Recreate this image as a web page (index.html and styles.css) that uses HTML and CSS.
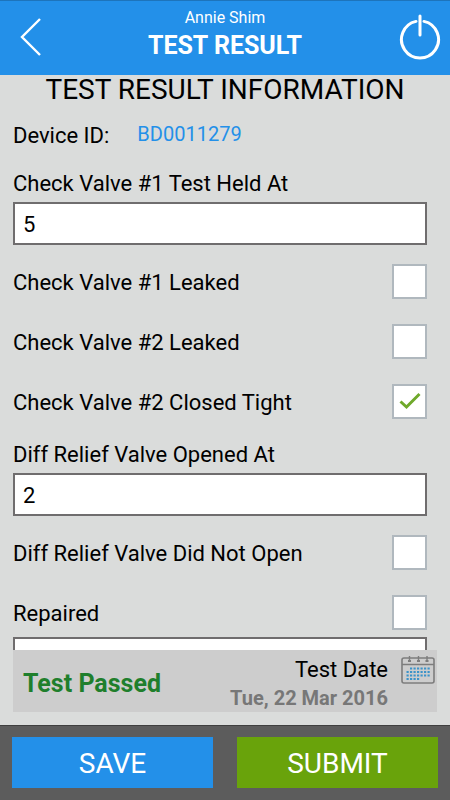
FILE: index.html
```html
<!DOCTYPE html>
<html lang="en">
<head>
    <title>Test Result</title>
    <meta charset="utf-8" />
    <meta name="viewport" content="width=device-width, initial-scale=1">
    <link rel="stylesheet" href="styles.css">
</head>
<body>
    <header class="header">
        <button type="button" class="icon-button back" aria-label="Back">
            <svg width="24" height="40" viewBox="0 0 24 40" fill="none" stroke="#fff" stroke-width="2.4">
                <path d="M22 2L4 20l18 18" />
            </svg>
        </button>
        <div class="header-text">
            <div class="user">Annie Shim</div>
            <h1>TEST RESULT</h1>
        </div>
        <button type="button" class="icon-button" aria-label="Log out">
            <svg width="42" height="46" viewBox="0 0 42 46" fill="none" stroke="#fff" stroke-width="3" stroke-linecap="round">
                <path d="M17 7.4a18.5 18.5 0 1 0 8 0M21 2v19" />
            </svg>
        </button>
    </header>
    <form class="form" id="result-form">
        <h2>TEST RESULT INFORMATION</h2>
        <div class="device">
            <span>Device ID:</span>
            <a href="#device">BD0011279</a>
        </div>
        <div class="field">
            <label for="cv1-held">Check Valve #1 Test Held At</label>
            <input type="text" id="cv1-held" value="5">
        </div>
        <div class="check">
            <label for="cv1-leaked">Check Valve #1 Leaked</label>
            <input type="checkbox" id="cv1-leaked">
        </div>
        <div class="check">
            <label for="cv2-leaked">Check Valve #2 Leaked</label>
            <input type="checkbox" id="cv2-leaked">
        </div>
        <div class="check">
            <label for="cv2-closed">Check Valve #2 Closed Tight</label>
            <span class="tick-box">
                <input type="checkbox" id="cv2-closed" checked>
                <svg class="tick" width="22" height="18" viewBox="0 0 22 18" fill="none" stroke="#6fa92b" stroke-width="3">
                    <path d="M1.5 9.5l6 5.5L20.5 2" />
                </svg>
            </span>
        </div>
        <div class="field">
            <label for="relief-opened">Diff Relief Valve Opened At</label>
            <input type="text" id="relief-opened" value="2">
        </div>
        <div class="check">
            <label for="relief-closed">Diff Relief Valve Did Not Open</label>
            <input type="checkbox" id="relief-closed">
        </div>
        <div class="check">
            <label for="repaired">Repaired</label>
            <input type="checkbox" id="repaired">
        </div>
        <textarea class="notes" aria-label="Repair notes"></textarea>
    </form>
    <section class="summary">
        <div class="status">Test Passed</div>
        <div class="date">
            <div class="date-label">Test Date</div>
            <div class="date-value">Tue, 22 Mar 2016</div>
        </div>
        <button type="button" class="calendar" aria-label="Pick test date">
            <svg width="34" height="30" viewBox="0 0 34 30" fill="none" stroke="#7d7d7d">
                <rect x="1" y="3" width="32" height="25" rx="2" stroke-width="1.6" />
                <path d="M1 9.5h32" stroke-width="1.5" />
                <path d="M8.5 1v6M17.5 1v6M26 1v6" stroke-width="1.4" />
                <path d="M8.5 5v2M17.5 5v2M26 5v2" stroke-width="3" />
                <g stroke="#3c93c9" stroke-width="2.2" stroke-dasharray="2.2 1.3">
                    <path d="M9 13.5h20.5" />
                    <path d="M5.5 17h24" />
                    <path d="M5.5 20.5h24" />
                    <path d="M5.5 24h13" />
                </g>
            </svg>
        </button>
    </section>
    <footer class="footer">
        <button type="button" class="save">SAVE</button>
        <button type="submit" form="result-form" class="submit">SUBMIT</button>
    </footer>
</body>
</html>
```

FILE: styles.css
```css
* {
    box-sizing: border-box;
}
body {
    font-family: Roboto, 'Liberation Sans', sans-serif;
    font-size: 22px;
    line-height: 28px;
    color: #000;
    background-color: #dadcdb;
    margin: 0;
    height: 100vh;
    display: flex;
    flex-direction: column;
}
button, input, textarea {
    font-family: inherit;
    margin: 0;
}
button {
    border: none;
    padding: 0;
    cursor: pointer;
}
svg {
    display: block;
}
.header {
    display: flex;
    align-items: center;
    justify-content: space-between;
    height: 75px;
    flex-shrink: 0;
    padding: 0 9px 2px;
    color: #fff;
    background-color: #2390e9;
    border-top: 1px solid #1d74bb;
}
.header-text {
    text-align: center;
    padding-bottom: 6px;
}
.user {
    font-size: 16px;
    line-height: 24px;
}
h1 {
    font-size: 25px;
    line-height: 32px;
    margin: 0;
}
.icon-button {
    display: flex;
    width: 42px;
    background: none;
}
.back {
    padding-left: 9px;
}
.form {
    flex: 1;
    min-height: 0;
    overflow: hidden;
    margin-top: -4px;
    padding: 4px 23px 0 13px;
}
h2 {
    font-size: 28px;
    font-weight: normal;
    line-height: 30px;
    text-align: center;
    margin: 0 -10px 17px 0;
}
.device {
    display: flex;
    gap: 28px;
}
.device a {
    font-size: 20px;
    line-height: 24px;
    color: #2390e9;
    text-decoration: none;
}
.field {
    margin-top: 20px;
}
.check + .field {
    margin-top: 22px;
}
.field label {
    display: block;
    margin-bottom: 4px;
}
.field input {
    display: block;
    width: 100%;
    height: 43px;
    font-size: 22px;
    color: #000;
    padding: 2px 8px 0;
    background-color: #fff;
    border: 2px solid #6f6d6e;
    border-radius: 0;
}
.check {
    display: flex;
    align-items: center;
    justify-content: space-between;
    height: 35px;
    margin-top: 25px;
}
.field + .check {
    margin-top: 19px;
}
.check label {
    padding-top: 2px;
}
.check input {
    appearance: none;
    display: block;
    width: 35px;
    height: 35px;
    background-color: #fff;
    border: 2px solid #b0b8be;
}
.tick-box {
    position: relative;
}
.tick {
    position: absolute;
    top: 8px;
    left: 7px;
    pointer-events: none;
    display: none;
}
.check input:checked + .tick {
    display: block;
}
.notes {
    display: block;
    width: 100%;
    height: 90px;
    margin-top: 7px;
    border: 2px solid #6f6d6e;
    border-radius: 0;
    resize: none;
}
.summary {
    display: flex;
    align-items: center;
    flex-shrink: 0;
    height: 62px;
    margin: 0 13px 13px;
    padding: 5px 2px 0 10px;
    background-color: #cdcdcd;
}
.status {
    flex: 1;
    font-size: 25px;
    font-weight: bold;
    color: #1f7f2c;
}
.date {
    text-align: right;
}
.date-value {
    font-size: 20px;
    font-weight: bold;
    color: #777;
}
.calendar {
    align-self: flex-start;
    margin-left: 13px;
    background: none;
}
.footer {
    display: flex;
    gap: 24px;
    flex-shrink: 0;
    height: 75px;
    padding: 11px 12px 12px;
    background-color: #5c5c5c;
    border-top: 1px solid #3f3f3f;
}
.footer button {
    flex: 1;
    font-size: 28px;
    padding-top: 2px;
    color: #fff;
}
.save {
    background-color: #2390e9;
}
.submit {
    background-color: #69a30b;
}
```
